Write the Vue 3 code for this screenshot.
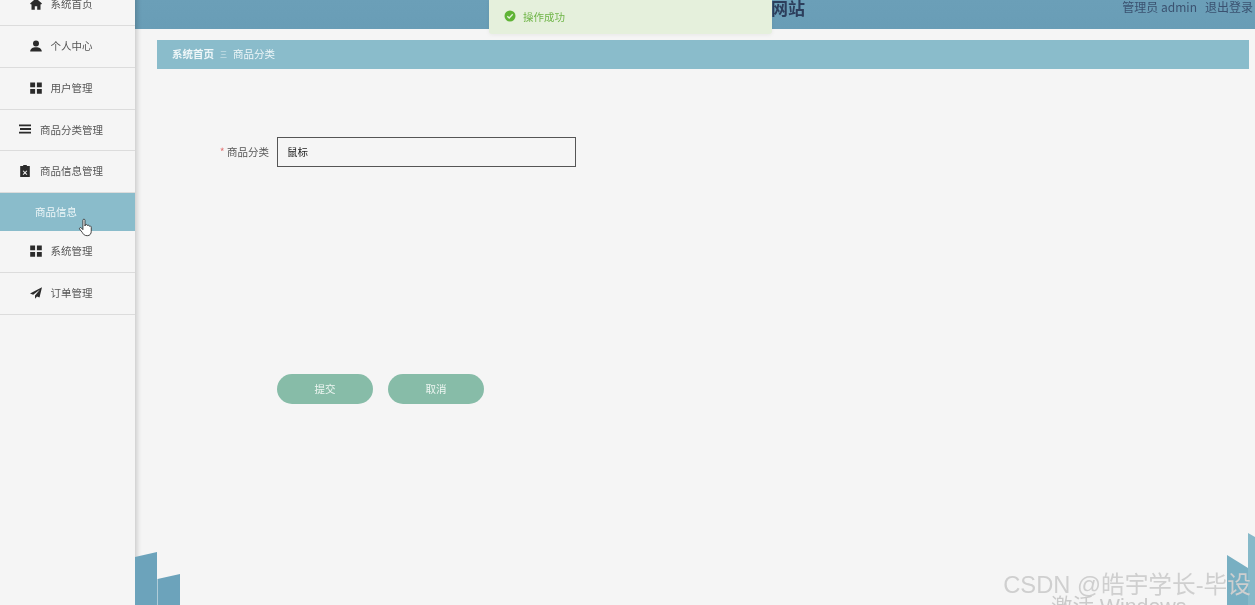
<script setup>
const menu = [
  { label: '系统首页', icon: 'home' },
  { label: '个人中心', icon: 'user' },
  { label: '用户管理', icon: 'grid' },
  { label: '商品分类管理', icon: 'bars' },
  { label: '商品信息管理', icon: 'clip' },
  { label: '商品信息', sub: true },
  { label: '系统管理', icon: 'grid' },
  { label: '订单管理', icon: 'send' }
]
</script>

<template>
  <div class="page">
    <aside class="side">
      <div v-for="m in menu" :key="m.label" class="item" :class="{ sub: m.sub }">
        <svg v-if="m.icon" class="ico" viewBox="0 0 12 12">
          <path v-if="m.icon === 'home'" d="M6 .3 0 5.600l1 1 .5-.4V11.800h3.300V8.200h2.400v3.600h3.300V6.200l.5.4 1-1z" />
          <path v-else-if="m.icon === 'user'" d="M6 .5a3 3 0 1 1 0 6 3 3 0 0 1 0-6zM.2 11.500c0-2.900 2.600-4.300 5.800-4.300s5.800 1.400 5.800 4.300z" />
          <path v-else-if="m.icon === 'grid'" d="M.2.400h4.900v4.900H.2zM6.900.400h4.900v4.900H6.900zM.2 6.900h4.900v4.900H.2zM6.900 6.900h4.900v4.900H6.900z" />
          <path v-else-if="m.icon === 'bars'" d="M0 1.400h12v1.900H0zM1 5.100h11v1.800H1zM0 8.700h12v1.900H0z" />
          <path v-else-if="m.icon === 'clip'" fill-rule="evenodd" d="M4.200 0h3.600v1.100h3V12H1.200V1.100h3zM4.400 5.400 3.700 6.100 5.300 7.700 3.700 9.300l.7.7L6 8.400 7.600 10l.7-.7L6.700 7.700 8.300 6.100l-.7-.7L6 7z" />
          <path v-else d="M12 .2 0 6.500l3.200 1.300L10 2.600 5 8.600v3.200l2-2.300 2.500 1.100z" />
        </svg>
        <span>{{ m.label }}</span>
      </div>
      <svg class="hand" viewBox="0 0 14 18">
        <path d="M4.300 1.800c0-1.300 1.800-1.300 1.800 0v5l.3-1.100c1-.5 1.700 0 1.800.6.800-.5 1.600 0 1.700.7.800-.4 1.700 0 1.700 1v3.400c0 2-1 3.900-3.500 3.900-2.300 0-3.400-1.100-4.300-2.800L1.400 9.500c-.5-1 .7-1.800 1.500-1l1.400 1.500z" />
      </svg>
    </aside>

    <main class="main">
      <header class="top">
        <span class="title">网站</span>
        <span class="user">管理员 admin</span>
        <span class="out">退出登录</span>
      </header>

      <nav class="crumb">
        <b>系统首页</b>
        <i>三</i>
        <span>商品分类</span>
      </nav>

      <form class="form" @submit.prevent>
        <div class="row">
          <label class="lab"><em>*</em> 商品分类</label>
          <div class="input">鼠标</div>
        </div>
        <div class="btns">
          <button class="btn" type="button">提交</button>
          <button class="btn" type="button">取消</button>
        </div>
      </form>
    </main>

    <div class="toast">
      <svg viewBox="0 0 12 12"><circle cx="6" cy="6" r="5.500" fill="#5fb336" /><path d="M3.300 6.200 5.200 8 8.700 4.300" fill="none" stroke="#e6f0dc" stroke-width="1.300" /></svg>
      <span>操作成功</span>
    </div>

    <svg class="deco left" viewBox="0 0 45 53"><path d="M0 5 22 0v53H0z" fill="#6ca3bb" /><path d="M22.500 27 45 22v31H22.500z" fill="#6ca3bb" /></svg>
    <svg class="deco right" viewBox="0 0 28 72"><path d="M21 0l7 4v68h-7z" fill="#86b9c9" /><path d="M0 22l21 13v37H0z" fill="#78afc2" /></svg>

    <div class="wm">CSDN @皓宇学长-毕设</div>
    <div class="win">激活 Windows</div>
  </div>
</template>

<style>
html, body { margin: 0; overflow: hidden; background: #f5f5f5; }
</style>

<style scoped>
.page {
  position: relative;
  display: flex;
  width: 1255px;
  height: 605px;
  overflow: hidden;
  background: #f5f5f5;
  font-family: "Noto Sans CJK SC", "Liberation Sans", sans-serif;
  font-size: 10.5px;
  color: #555;
  filter: blur(.4px);
}
.side {
  position: relative;
  z-index: 2;
  flex: 0 0 135px;
  margin-top: -16px;
  background: #f5f5f5;
  box-shadow: 2px 0 5px rgba(0, 0, 0, .18);
}
.item {
  display: flex;
  align-items: center;
  justify-content: center;
  gap: 9px;
  box-sizing: border-box;
  width: 100%;
  height: 42px;
  padding: 0 13px 2px 0;
  border-bottom: 1px solid #dcdcdc;
}
.item:nth-child(4) { height: 41px; }
.item.sub {
  height: 38px;
  padding: 0 23px 2px 0;
  border: 0;
  background: #8abccb;
  color: #eef6f8;
}
.ico { width: 12px; height: 12px; fill: #2b2b2b; flex: none; }
.hand {
  position: absolute;
  left: 78px;
  top: 234px;
  width: 16px;
  height: 21px;
  fill: #fff;
  stroke: #333;
  stroke-width: .8;
}
.main { flex: 1; display: flex; flex-direction: column; min-width: 0; }
.top {
  display: flex;
  align-items: flex-start;
  flex: 0 0 29px;
  box-sizing: border-box;
  background: linear-gradient(#6b9fb8, #699db6);
  color: #3b5270;
  font-size: 12px;
  line-height: 14px;
}
.title {
  margin-left: 636px;
  margin-top: -4px;
  font-size: 17px;
  font-weight: 700;
  line-height: 24px;
  color: #2c3e5c;
}
.user { margin-left: auto; }
.out { margin-left: 8px; margin-right: 2px; }
.crumb {
  display: flex;
  align-items: center;
  gap: 6px;
  box-sizing: border-box;
  height: 29px;
  margin: 11px 6px 0 22px;
  padding: 0 0 2px 15px;
  background: #8abccb;
  color: #eef6f8;
}
.crumb b { font-weight: 700; }
.crumb i { font-style: normal; font-size: 7px; opacity: .8; }
.form { padding: 68px 0 0 0; }
.row { display: flex; align-items: center; }
.lab { width: 134px; padding-bottom: 1px; text-align: right; }
.lab em { color: #e37a7a; font-style: normal; }
.input {
  box-sizing: border-box;
  width: 299px;
  height: 30px;
  margin-left: 8px;
  padding-left: 9px;
  border: 1px solid #555;
  line-height: 28px;
  color: #222;
}
.btns { display: flex; gap: 15px; margin: 207px 0 0 142px; }
.btn {
  width: 96px;
  height: 30px;
  padding: 0 0 2px;
  border: 0;
  border-radius: 15px;
  background: #87bca8;
  color: #eef6f2;
  font: inherit;
}
.toast {
  position: absolute;
  z-index: 3;
  left: 489px;
  top: 0;
  display: flex;
  align-items: center;
  gap: 7px;
  box-sizing: border-box;
  width: 283px;
  height: 34px;
  padding: 0 0 2px 15px;
  border-radius: 0 0 3px 3px;
  background: #e5f0dc;
  box-shadow: 0 1px 4px rgba(0, 0, 0, .06);
  color: #6fb548;
}
.toast svg { width: 12px; height: 12px; }
.deco { position: absolute; z-index: 3; bottom: 0; }
.left { left: 135px; width: 45px; height: 53px; }
.right { right: 0; width: 28px; height: 72px; }
.wm {
  position: absolute;
  z-index: 4;
  right: 4px;
  bottom: 7px;
  font-family: "Liberation Sans", "Noto Sans CJK SC", sans-serif;
  font-size: 23.700px;
  line-height: 26px;
  color: #cfcfcf;
}
.win {
  position: absolute;
  z-index: 4;
  left: 1051px;
  top: 595px;
  font-family: "Liberation Sans", "Noto Sans CJK SC", sans-serif;
  font-size: 21.400px;
  line-height: 24px;
  color: #cacaca;
}
</style>
